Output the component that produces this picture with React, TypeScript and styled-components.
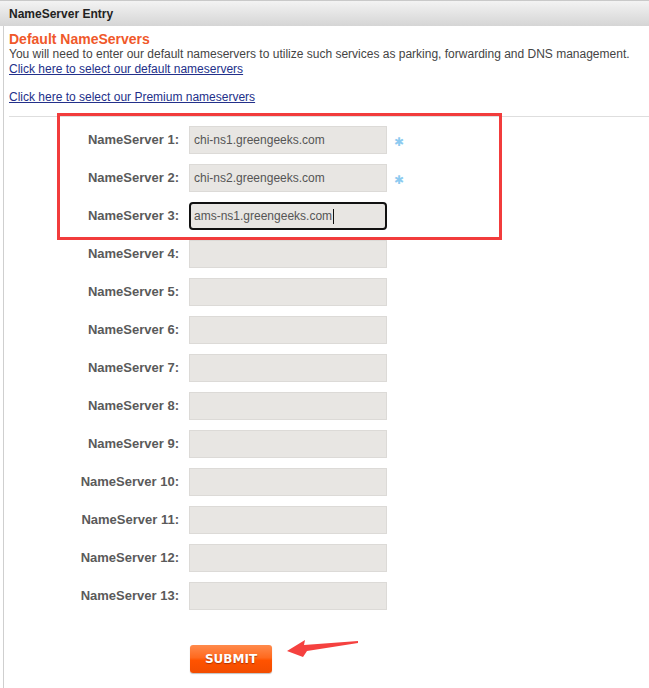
import React from "react";
import styled, { createGlobalStyle } from "styled-components";

const GlobalStyle = createGlobalStyle`
  html, body {
    margin: 0;
    padding: 0;
    background: #fff;
    font-family: "Liberation Sans", Arial, sans-serif;
  }
`;

const Page = styled.div`
  position: relative;
  width: 649px;
  height: 688px;
  overflow: hidden;
`;

const Header = styled.div`
  height: 25px;
  border-top: 1px solid #c9c9c9;
  background: linear-gradient(to bottom, #f3f3f3, #d5d5d5);
  display: flex;
  align-items: center;
  padding-left: 9px;
  font-size: 12px;
  font-weight: 700;
  color: #222;
`;

const Body = styled.div`
  margin-left: 3px;
  border-left: 1px solid #cfcfcf;
  padding: 5px 0 40px 5px;
`;

const Title = styled.div`
  font-size: 14px;
  font-weight: 700;
  color: #f0582a;
  line-height: 16px;
`;

const Text = styled.div`
  font-size: 12px;
  color: #444;
  line-height: 15px;
`;

const Link = styled.a<{ $gap?: boolean }>`
  display: block;
  width: fit-content;
  font-size: 12px;
  line-height: 14px;
  color: #23308a;
  text-decoration: underline;
  margin-top: ${(p) => (p.$gap ? "14px" : "0")};
  cursor: pointer;
`;

const Divider = styled.div`
  height: 1px;
  background: #dedede;
  margin-top: 12px;
`;

const Form = styled.div`
  display: grid;
  grid-template-columns: 170px 198px auto;
  column-gap: 10px;
  row-gap: 10px;
  align-items: center;
  margin-top: 9px;
`;

const Label = styled.div`
  text-align: right;
  font-size: 13px;
  font-weight: 700;
  color: #5a5a5a;
  padding-bottom: 1px;
`;

const Field = styled.div<{ $focused?: boolean }>`
  box-sizing: border-box;
  height: 28px;
  display: flex;
  align-items: center;
  padding-left: ${(p) => (p.$focused ? "3px" : "4px")};
  background: #e8e6e3;
  border: ${(p) => (p.$focused ? "2px solid #111" : "1px solid #dcdad7")};
  border-radius: ${(p) => (p.$focused ? "4px" : "0")};
  font-size: 12px;
  color: #555;
  white-space: nowrap;
`;

const Caret = styled.span`
  display: inline-block;
  width: 1px;
  height: 15px;
  background: #111;
  margin-left: 1px;
`;

const Required = styled.span`
  display: block;
  color: #8ccaf0;
  font-family: "DejaVu Sans", sans-serif;
  font-size: 12px;
  line-height: 12px;
  margin-left: -3px;
  padding-top: 3px;
`;

const Actions = styled.div`
  padding-left: 181px;
  margin-top: 35px;
`;

const SubmitButton = styled.button`
  width: 82px;
  height: 28px;
  border: none;
  border-radius: 3px;
  background: linear-gradient(to bottom, #ff8a4c 0%, #ff6a1f 45%, #ff5300 55%, #f24c00 100%);
  box-shadow: 0 1px 1px rgba(0, 0, 0, 0.25);
  color: #fff;
  font-family: "DejaVu Sans", "Liberation Sans", sans-serif;
  font-size: 12px;
  font-weight: 700;
  text-shadow: 0 1px 1px rgba(120, 30, 0, 0.6);
  cursor: pointer;
`;

const Highlight = styled.div`
  position: absolute;
  left: 57px;
  top: 113px;
  width: 445px;
  height: 127px;
  box-sizing: border-box;
  border: 3px solid #f23c3c;
  pointer-events: none;
`;

const Arrow = styled.svg`
  position: absolute;
  left: 280px;
  top: 634px;
  pointer-events: none;
`;

const servers: { value?: string; required?: boolean; focused?: boolean }[] = [
  { value: "chi-ns1.greengeeks.com", required: true },
  { value: "chi-ns2.greengeeks.com", required: true },
  { value: "ams-ns1.greengeeks.com", focused: true },
  {}, {}, {}, {}, {}, {}, {}, {}, {}, {},
];

export default function App() {
  return (
    <Page>
      <GlobalStyle />
      <Header>NameServer Entry</Header>
      <Body>
        <Title>Default NameServers</Title>
        <Text>You will need to enter our default nameservers to utilize such services as parking, forwarding and DNS management.</Text>
        <Link>Click here to select our default nameservers</Link>
        <Link $gap>Click here to select our Premium nameservers</Link>
        <Divider />
        <Form>
          {servers.map((s, i) => (
            <React.Fragment key={i}>
              <Label>NameServer {i + 1}:</Label>
              <Field $focused={s.focused}>
                {s.value}
                {s.focused && <Caret />}
              </Field>
              <div>{s.required && <Required>✱</Required>}</div>
            </React.Fragment>
          ))}
        </Form>
        <Actions>
          <SubmitButton>SUBMIT</SubmitButton>
        </Actions>
      </Body>
      <Highlight />
      <Arrow width="90" height="30" viewBox="280 634 90 30">
        <polygon
          points="287,651 305,640 304,645 358,641 358,643 307,651 303,657"
          fill="#f5413f"
        />
      </Arrow>
    </Page>
  );
}
